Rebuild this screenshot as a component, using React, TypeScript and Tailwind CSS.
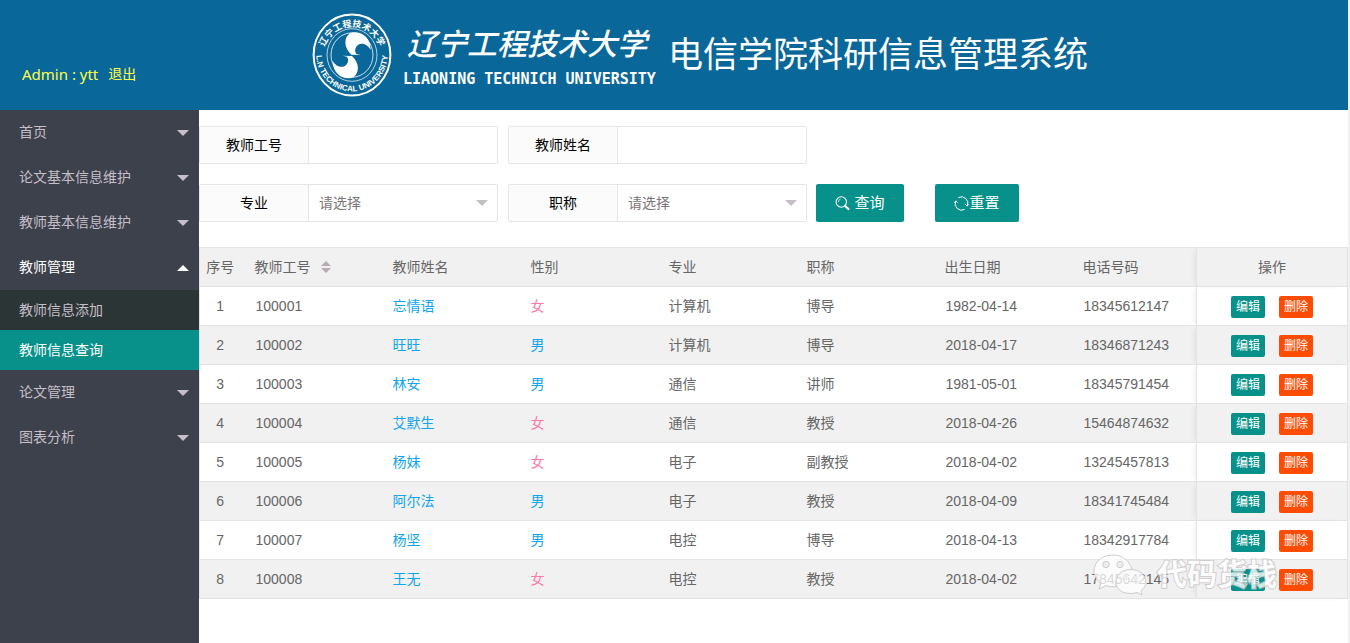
import React from "react";

const CARET_DOWN = "M0 0 L12 0 L6 6 Z";
const CARET_UP = "M0 6 L12 6 L6 0 Z";

function Caret({ up = false, className = "" }: { up?: boolean; className?: string }) {
  return (
    <svg viewBox="0 0 12 6" className={`h-[6px] w-[12px] ${className}`} fill="currentColor" aria-hidden="true">
      <path d={up ? CARET_UP : CARET_DOWN} />
    </svg>
  );
}

function Seal() {
  return (
    <svg viewBox="0 0 80 84" className="h-[84px] w-[80px] shrink-0" fill="none" aria-hidden="true">
      <defs>
        <path id="arc-top" d="M11 44 A29 30 0 0 1 69 44" />
        <path id="arc-bottom" d="M4.5 36 A35.8 37.5 0 1 0 75.5 36" />
      </defs>
      <ellipse cx="40" cy="42" rx="38.4" ry="40.4" stroke="white" strokeWidth="2" />
      <ellipse cx="40" cy="42" rx="25" ry="26.3" stroke="white" strokeWidth="0.7" />
      <ellipse cx="40" cy="42" rx="21" ry="22.2" stroke="white" strokeWidth="0.8" />
      <g fill="white" transform="translate(-4 -7) scale(0.3333)">
        <path d="M130 146 C108 126 106 96 126 82 C150 72 188 88 188 132 C180 115 157 106 146 121 C140 129 140 136 145 144 L158 147 Z" />
        <path
          d="M130 146 C108 126 106 96 126 82 C150 72 188 88 188 132 C180 115 157 106 146 121 C140 129 140 136 145 144 L158 147 Z"
          transform="rotate(180 131 148)"
        />
      </g>
      <text fill="white" fontSize="9" fontWeight="700" fontFamily="'Noto Sans CJK SC', sans-serif">
        <textPath href="#arc-top" startOffset="50%" textAnchor="middle">辽宁工程技术大学</textPath>
      </text>
      <text fill="white" fontSize="8" fontWeight="700" fontFamily="'Liberation Sans Narrow', 'Liberation Sans', sans-serif">
        <textPath href="#arc-bottom" startOffset="50%" textAnchor="middle">L.N TECHNICAL UNIVERSITY</textPath>
      </text>
    </svg>
  );
}

function Header() {
  return (
    <header className="flex h-[110px] bg-[#096799] text-white">
      <div className="flex w-[312px] shrink-0 items-center gap-[10px] pt-[38px] pl-[22px] font-['Noto_Sans','Noto_Sans_CJK_SC',sans-serif] leading-[20px] text-[#ffff4a]">
        <span className="text-[15px]">Admin : ytt</span>
        <a href="#logout">退出</a>
      </div>
      <div className="flex items-center">
        <Seal />
        <div className="flex w-[276px] shrink-0 flex-col pt-2 pl-[11px] whitespace-nowrap">
          <span className="pl-[4px] text-[30px] leading-[40px] font-medium italic">辽宁工程技术大学</span>
          <span className="font-['DejaVu_Sans_Mono',monospace] text-[15px] leading-[28px] font-bold">
            LIAONING TECHNICH UNIVERSITY
          </span>
        </div>
        <h1 className="text-[35px] leading-[42px] font-normal whitespace-nowrap">电信学院科研信息管理系统</h1>
      </div>
    </header>
  );
}

interface MenuEntry {
  label: string;
  children?: { label: string; active?: boolean }[];
}

const MENU: MenuEntry[] = [
  { label: "首页" },
  { label: "论文基本信息维护" },
  { label: "教师基本信息维护" },
  { label: "教师管理", children: [{ label: "教师信息添加" }, { label: "教师信息查询", active: true }] },
  { label: "论文管理" },
  { label: "图表分析" },
];

function Sidebar() {
  return (
    <nav className="w-[199px] shrink-0 bg-[#3c414b] text-[#c6bec8]">
      <ul>
        {MENU.map((item) => (
          <li key={item.label}>
            <button
              type="button"
              className={`flex h-[45px] w-full items-center justify-between pr-[10px] pl-[19px] ${item.children ? "text-white" : ""}`}
            >
              <span className="pb-[2px]">{item.label}</span>
              <Caret up={!!item.children} />
            </button>
            {item.children && (
              <ul className="bg-[#2b3536]">
                {item.children.map((child) => (
                  <li key={child.label}>
                    <a
                      href="#teacher"
                      className={`flex h-[40px] items-center pl-[19px] ${child.active ? "bg-[#07918a] text-white" : ""}`}
                    >
                      {child.label}
                    </a>
                  </li>
                ))}
              </ul>
            )}
          </li>
        ))}
      </ul>
    </nav>
  );
}

function Field({ id, label, select = false }: { id: string; label: string; select?: boolean }) {
  return (
    <div className="flex h-[38px] w-[299px] rounded-[2px] border border-[#e6e4e6]">
      <label htmlFor={id} className="flex w-[109px] items-center justify-center border-r border-[#e6e4e6] bg-[#fbfbfb] text-black">
        {label}
      </label>
      {select ? (
        <div className="relative flex-1">
          <select id={id} className="h-full w-full appearance-none bg-white pl-[10px] text-[#7b7579] outline-none">
            <option>请选择</option>
          </select>
          <Caret className="pointer-events-none absolute top-[15px] right-[9px] text-[#c4bfc4]" />
        </div>
      ) : (
        <input id={id} type="text" className="w-full min-w-0 flex-1 bg-white px-[10px] outline-none" />
      )}
    </div>
  );
}

function SearchIcon() {
  return (
    <svg viewBox="0 0 15 15" className="h-[15px] w-[15px]" fill="none" stroke="currentColor" aria-hidden="true">
      <circle cx="6.3" cy="6" r="5.2" strokeWidth="1.1" />
      <path d="M3.4 6 A3 3 0 0 1 5.6 3" strokeWidth="0.7" />
      <path d="M10.2 10 L13.4 13" strokeWidth="2.2" strokeLinecap="round" />
    </svg>
  );
}

function RefreshIcon() {
  return (
    <svg viewBox="0 0 15 15" className="h-[15px] w-[15px]" fill="none" stroke="currentColor" strokeWidth="1" aria-hidden="true">
      <path d="M4.4 1.6 A6.4 6.4 0 0 1 13.4 9.6" />
      <path d="M10.6 13.4 A6.4 6.4 0 0 1 1.6 5.4" />
      <path d="M11.4 8.4 L13.2 10.2 L14.5 8 M0.5 7 L1.8 4.8 L3.6 6.6" />
    </svg>
  );
}

function Filters() {
  return (
    <form className="flex flex-col gap-5 pt-4 pb-[25px]">
      <div className="flex gap-[10px]">
        <Field id="teacher-no" label="教师工号" />
        <Field id="teacher-name" label="教师姓名" />
      </div>
      <div className="flex gap-[9px]">
        <div className="flex gap-[10px]">
          <Field id="major" label="专业" select />
          <Field id="title" label="职称" select />
        </div>
        <div className="flex gap-[31px] text-[15px] text-white">
          <button type="button" className="flex h-[38px] w-[88px] items-center justify-center gap-1 rounded-[2px] bg-[#07918a]">
            <SearchIcon />
            查询
          </button>
          <button type="reset" className="flex h-[38px] w-[84px] items-center justify-center rounded-[2px] bg-[#07918a]">
            <RefreshIcon />
            重置
          </button>
        </div>
      </div>
    </form>
  );
}

const ROWS: [string, string, string, string, string, string, string][] = [
  ["100001", "忘情语", "女", "计算机", "博导", "1982-04-14", "18345612147"],
  ["100002", "旺旺", "男", "计算机", "博导", "2018-04-17", "18346871243"],
  ["100003", "林安", "男", "通信", "讲师", "1981-05-01", "18345791454"],
  ["100004", "艾默生", "女", "通信", "教授", "2018-04-26", "15464874632"],
  ["100005", "杨妹", "女", "电子", "副教授", "2018-04-02", "13245457813"],
  ["100006", "阿尔法", "男", "电子", "教授", "2018-04-09", "18341745484"],
  ["100007", "杨坚", "男", "电控", "博导", "2018-04-13", "18342917784"],
  ["100008", "王无", "女", "电控", "教授", "2018-04-02", "17845642145"],
];

const ACTION_CELL = "border-x border-[#e4e2e4] shadow-[-4px_0_6px_-2px_rgba(0,0,0,0.08)]";

function TeacherTable() {
  return (
    <table className="w-full table-fixed border-collapse border border-[#e4e2e4] text-left text-[#666]">
      <colgroup>
        <col className="w-[41px]" />
        <col className="w-[138px]" />
        <col className="w-[138px]" />
        <col className="w-[138px]" />
        <col className="w-[138px]" />
        <col className="w-[138px]" />
        <col className="w-[138px]" />
        <col />
        <col className="w-[151px]" />
      </colgroup>
      <thead>
        <tr className="h-[39px] border-b border-[#e4e2e4] bg-[#f1f1f1]">
          <th className="text-center font-normal">序号</th>
          <th className="pl-[14px] font-normal">
            <span className="flex items-center gap-[10px]">
              教师工号
              <svg viewBox="0 0 10 12" className="h-[12px] w-[10px]" fill="#b5adb3" aria-hidden="true">
                <path d="M0 5 L5 0 L10 5 Z M0 7 L5 12 L10 7 Z" />
              </svg>
            </span>
          </th>
          {["教师姓名", "性别", "专业", "职称", "出生日期", "电话号码"].map((h) => (
            <th key={h} className="pl-[14px] font-normal">
              {h}
            </th>
          ))}
          <th className={`text-center font-normal ${ACTION_CELL}`}>操作</th>
        </tr>
      </thead>
      <tbody>
        {ROWS.map(([no, name, sex, major, title, birth, phone], i) => (
          <tr key={no} className="h-[39px] border-b border-[#e4e2e4] even:bg-[#f1f1f1]">
            <td className="text-center">{i + 1}</td>
            <td className="pl-[15px]">{no}</td>
            <td className="pl-[14px] text-[#10a5ee]">{name}</td>
            <td className={`pl-[14px] ${sex === "女" ? "text-[#fb78a8]" : "text-[#10a5ee]"}`}>{sex}</td>
            <td className="pl-[14px]">{major}</td>
            <td className="pl-[14px]">{title}</td>
            <td className="pl-[15px]">{birth}</td>
            <td className="pl-[15px]">{phone}</td>
            <td className={ACTION_CELL}>
              <div className="flex justify-center gap-[14px] pt-[2px] text-[12px] leading-[22px] text-white">
                <button type="button" className="h-[22px] w-[34px] rounded-[2px] bg-[#07918a]">
                  编辑
                </button>
                <button type="button" className="h-[22px] w-[34px] rounded-[2px] bg-[#ff4c05]">
                  删除
                </button>
              </div>
            </td>
          </tr>
        ))}
      </tbody>
    </table>
  );
}

function Watermark() {
  return (
    <div className="pointer-events-none absolute right-[71px] bottom-[2px] flex items-center gap-[10px]">
      <svg viewBox="0 0 54 42" className="h-[42px] w-[54px]" stroke="#cfcbcf" strokeWidth="1" aria-hidden="true">
        <path
          d="M20 1 C9 1 1 8 1 17 C1 22 4 26 8 29 L6 35 L13 31.5 C16 32.6 19 33 23 32.6 C22 24 29 16 39 15.5 C37 7 29 1 20 1 Z"
          fill="white"
          fillOpacity="0.75"
        />
        <circle cx="13" cy="10.5" r="3.2" fill="#eeedee" />
        <circle cx="27" cy="10.5" r="3.2" fill="#eeedee" />
        <path
          d="M38 15.5 C29 15.5 23 21 23 28 C23 35 29 39.5 38 39.5 C40 39.5 42 39.2 44 38.5 L49 41 L48 36.5 C51 34.5 53 31.5 53 28 C53 21 46 15.5 38 15.5 Z"
          fill="white"
          fillOpacity="0.75"
        />
        <circle cx="33" cy="24" r="2.2" fill="#eeedee" stroke="none" />
        <circle cx="43" cy="24" r="2.2" fill="#eeedee" stroke="none" />
      </svg>
      <span className="text-[30px] leading-[44px] font-bold text-white opacity-80 [-webkit-text-stroke:2px_#c8c4c8] [paint-order:stroke_fill]">
        代码货栈
      </span>
    </div>
  );
}

export default function App() {
  return (
    <div className="flex min-h-screen flex-col border-r-2 border-[#f1f1f1] bg-white font-['Liberation_Sans','Noto_Sans_CJK_SC',sans-serif] text-[14px] leading-[20px]">
      <Header />
      <div className="flex flex-1">
        <Sidebar />
        <main className="min-w-0 flex-1">
          <Filters />
          <div className="relative">
            <TeacherTable />
            <Watermark />
          </div>
        </main>
      </div>
    </div>
  );
}
